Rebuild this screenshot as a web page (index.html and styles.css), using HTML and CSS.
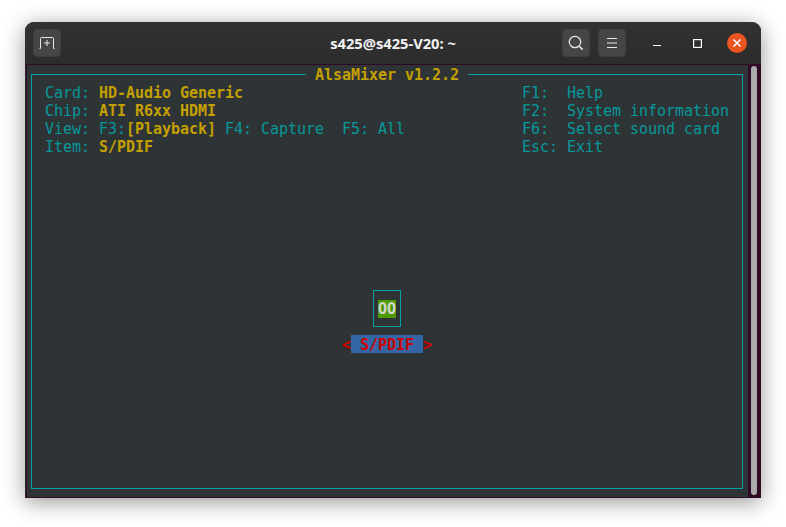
FILE: index.html
```html
<!DOCTYPE html>
<html lang="en">
<head>
<meta charset="utf-8">
<title>s425@s425-V20: ~</title>
<link rel="stylesheet" href="styles.css">
</head>
<body>
<div class="window">
  <header class="titlebar">
    <div class="tb-left">
      <button class="tb-btn" aria-label="New tab">
        <svg width="16" height="12" viewBox="0 0 16 12" fill="none" stroke="#e8e8e8" stroke-width="1"><path d="M.5 11.5H1.5V1.5Q1.5.5 2.5.5H13.5Q14.5.5 14.5 1.5V11.5H15.5"/><path d="M8 3V9M5 6H11"/></svg>
      </button>
    </div>
    <div class="tb-title">s425@s425-V20: ~</div>
    <div class="tb-right">
      <button class="tb-btn" aria-label="Search">
        <svg width="16" height="16" viewBox="0 0 16 16" fill="none" stroke="#e8e8e8" stroke-width="1.2"><circle cx="7" cy="7" r="5.7"/><path d="M11.3 11.3L14.6 14.6" stroke-width="1.6"/></svg>
      </button>
      <button class="tb-btn" aria-label="Menu">
        <svg width="12" height="12" viewBox="0 0 12 12" stroke="#e8e8e8" stroke-width="1"><path d="M1 1.5H11M1 6H11M1 10.5H11"/></svg>
      </button>
      <div class="wm">
        <span class="wm-btn"><svg width="10" height="10" viewBox="0 0 10 10" stroke="#fff" stroke-width="1.2"><path d="M1 7.5H9"/></svg></span>
        <span class="wm-btn"><svg width="10" height="10" viewBox="0 0 10 10" fill="none" stroke="#fff" stroke-width="1.2"><rect x="1.6" y="1.6" width="7.8" height="7.8"/></svg></span>
        <span class="wm-btn close"><svg width="10" height="10" viewBox="0 0 10 10" stroke="#fff" stroke-width="1.6"><path d="M1.5 1.5L8.5 8.5M8.5 1.5L1.5 8.5"/></svg></span>
      </div>
    </div>
  </header>
  <div class="body">
    <main class="term">
      <div class="frame">
        <div class="frame-title"><span>AlsaMixer v1.2.2</span></div>
        <div class="info">
          <pre class="lines"><span class="key">Card: </span><b>HD-Audio Generic</b>
<span class="key">Chip: </span><b>ATI R6xx HDMI</b>
<span class="key">View: F3:</span><b>[Playback]</b><span class="key"> F4: Capture  F5: All</span>
<span class="key">Item: </span><b>S/PDIF</b></pre>
          <pre class="lines key">F1:  Help
F2:  System information
F6:  Select sound card
Esc: Exit</pre>
        </div>
        <div class="mixer">
          <div class="control"><div class="level">OO</div></div>
          <div class="label"><span class="arrow">&lt;</span><span class="name">S/PDIF</span><span class="arrow">&gt;</span></div>
        </div>
      </div>
    </main>
    <div class="scroll"><div class="thumb"></div></div>
  </div>
</div>
</body>
</html>
```
FILE: styles.css
```css
* { box-sizing: border-box; }
html, body { margin: 0; height: 100%; }
body {
  background: #fff;
  padding: 22px 25px 0;
  overflow: hidden;
}
.window {
  width: 736px;
  height: 476px;
  border-radius: 9px 9px 0 0;
  background: #2c2c2c;
  box-shadow: 0 4px 22px rgba(0,0,0,.42);
  display: flex;
  flex-direction: column;
  overflow: hidden;
}
.titlebar {
  height: 42px;
  flex: none;
  display: flex;
  align-items: center;
  justify-content: space-between;
  background: linear-gradient(#323232, #2c2c2c);
  padding: 7px 14px 7px 8px;
  position: relative;
}
.tb-left, .tb-right { display: flex; align-items: center; }
.tb-right { gap: 8px; }
.tb-btn {
  width: 28px;
  height: 28px;
  padding: 0;
  border: 1px solid #3e3e3e;
  border-radius: 4px;
  background: #464646;
  display: flex;
  align-items: center;
  justify-content: center;
}
.tb-title {
  position: absolute;
  left: 0;
  right: 0;
  text-align: center;
  color: #f2f2f2;
  font: 700 14.7px/20px "Noto Sans", "Open Sans", sans-serif;
  pointer-events: none;
}
.wm { display: flex; align-items: center; gap: 20px; margin-left: 13px; }
.wm-btn { width: 20px; height: 20px; border-radius: 50%; display: flex; align-items: center; justify-content: center; }
.close { background: #e95420; }
.body {
  flex: 1;
  min-height: 0;
  display: flex;
  background: #300a24;
  padding: 1px 0 1px 1px;
  border-left: 1px solid #2c2c2c;
}
.term {
  flex: none;
  width: 721px;
  height: 432px;
  background: #2e3436;
  padding: 9px 5px 8px 4px;
}
.frame {
  height: 415px;
  border: 1px solid #05a0a2;
  position: relative;
  padding: 9px 9px;
  display: flex;
  flex-direction: column;
  font: 15px/18px "DejaVu Sans Mono", monospace;
  letter-spacing: -.03px;
}
.frame-title {
  position: absolute;
  top: -9px;
  left: 0;
  right: 0;
  text-align: center;
  font-weight: 700;
  color: #c4a000;
}
.frame-title span { background: #2e3436; padding: 0 9px; }
.info { display: flex; justify-content: space-between; padding-left: 4px; padding-right: 4px; }
.lines { margin: 0; font: inherit; width: 423px; }
.lines + .lines { width: 207px; }
.key { color: #06989a; }
.lines b { color: #c4a000; font-weight: 700; }
.mixer {
  flex: 1;
  display: flex;
  flex-direction: column;
  align-items: center;
  padding-top: 134px;
}
.control {
  width: 28px;
  height: 37px;
  border: 1px solid #05a0a2;
  display: flex;
  align-items: center;
  justify-content: center;
}
.level {
  width: 18px;
  height: 18px;
  background: #4e9a06;
  color: #d3d7cf;
  font-weight: 700;
  text-align: center;
}
.label { display: flex; height: 18px; margin-top: 8px; line-height: 21px; color: #cc0000; font-weight: 700; }
.arrow { width: 9px; text-align: center; }
.name { width: 72px; height: 18px; background: #3465a4; text-align: center; }
.scroll { flex: 1; padding: 1px 4px 2px 3px; }
.thumb { width: 6px; height: 100%; background: #ababab; border-radius: 3px; }
```
